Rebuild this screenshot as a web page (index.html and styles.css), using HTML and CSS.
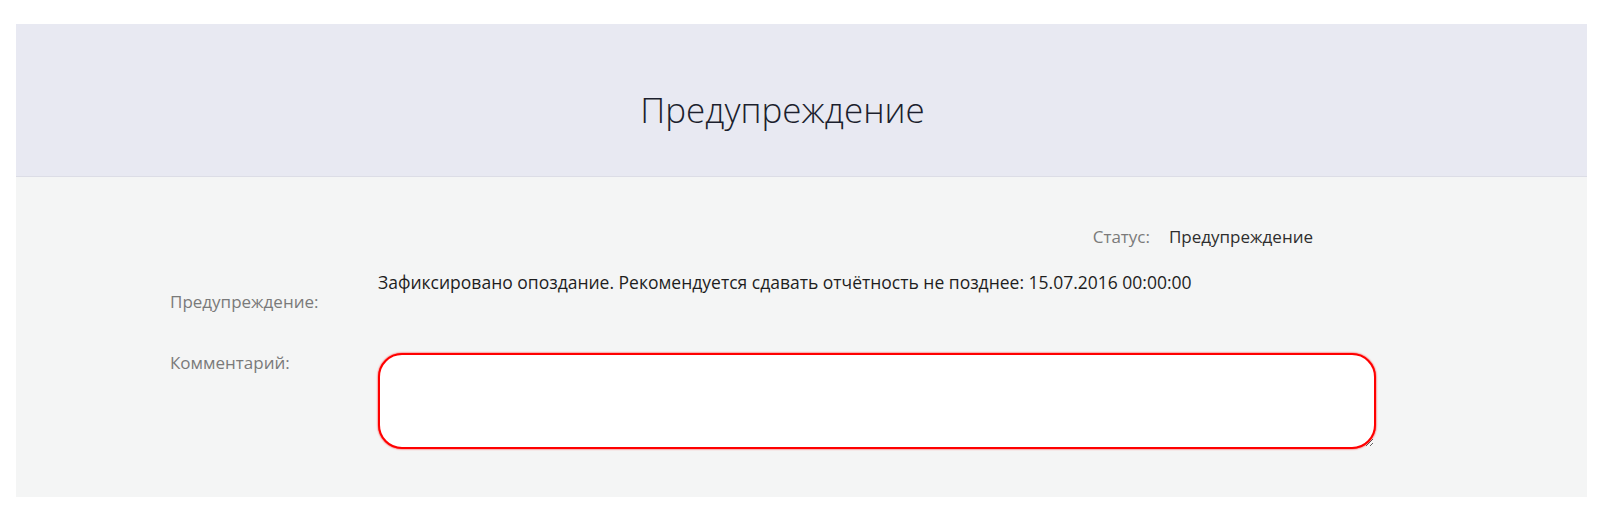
FILE: index.html
```html
<!DOCTYPE html>
<html lang="ru">
<head>
<meta charset="utf-8">
<title>Предупреждение</title>
<link rel="stylesheet" href="styles.css">
</head>
<body>
<div class="panel">
  <div class="header">
    <h1 class="title">Предупреждение</h1>
  </div>
  <div class="content">
    <div class="status-row">
      <span class="status-label">Статус:</span>
      <span class="status-value">Предупреждение</span>
    </div>
    <div class="form-row warn-row">
      <div class="label warn-label">Предупреждение:</div>
      <div class="value">Зафиксировано опоздание. Рекомендуется сдавать отчётность не позднее: 15.07.2016 00:00:00</div>
    </div>
    <div class="form-row comment-row">
      <div class="label">Комментарий:</div>
      <textarea class="comment"></textarea>
    </div>
  </div>
</div>
</body>
</html>
```
FILE: styles.css
```css
html, body {
  margin: 0;
  padding: 0;
  background: #ffffff;
}
body {
  font-family: "Open Sans", Roboto, "Liberation Sans", sans-serif;
  font-size: 17px;
  line-height: 20px;
  color: #222;
}
.panel {
  margin: 24px 16px 22px;
}
.header {
  height: 152px;
  background: #e8e9f2;
  border-bottom: 1px solid #dcdde6;
  display: flex;
  align-items: center;
  justify-content: center;
  padding-right: 38px;
}
.title {
  margin: 0;
  font-weight: 300;
  font-size: 35px;
  line-height: 44px;
  color: #1c1f2e;
  padding-top: 19px;
}
.content {
  background: #f4f5f5;
  padding: 50px 0 48px 154px;
}
.status-row {
  width: 1143px;
  display: flex;
  justify-content: flex-end;
  gap: 19px;
}
.status-label {
  color: #7a7a7a;
}
.status-value {
  color: #2e2e2e;
}
.form-row {
  display: grid;
  grid-template-columns: 208px 998px;
}
.warn-row {
  margin-top: 25px;
}
.label {
  color: #7a7a7a;
}
.warn-label {
  padding-top: 20px;
}
.value {
  color: #1e1e1e;
  font-size: 17.5px;
}
.comment-row {
  margin-top: 41px;
}
.comment {
  box-sizing: border-box;
  width: 998px;
  height: 96px;
  border: 2px solid #ff0000;
  border-radius: 24px;
  box-shadow: 0 0 2px #ff0000;
  background: #fff;
  outline: none;
  margin: 0;
  padding: 8px 14px;
  font: inherit;
}
```
